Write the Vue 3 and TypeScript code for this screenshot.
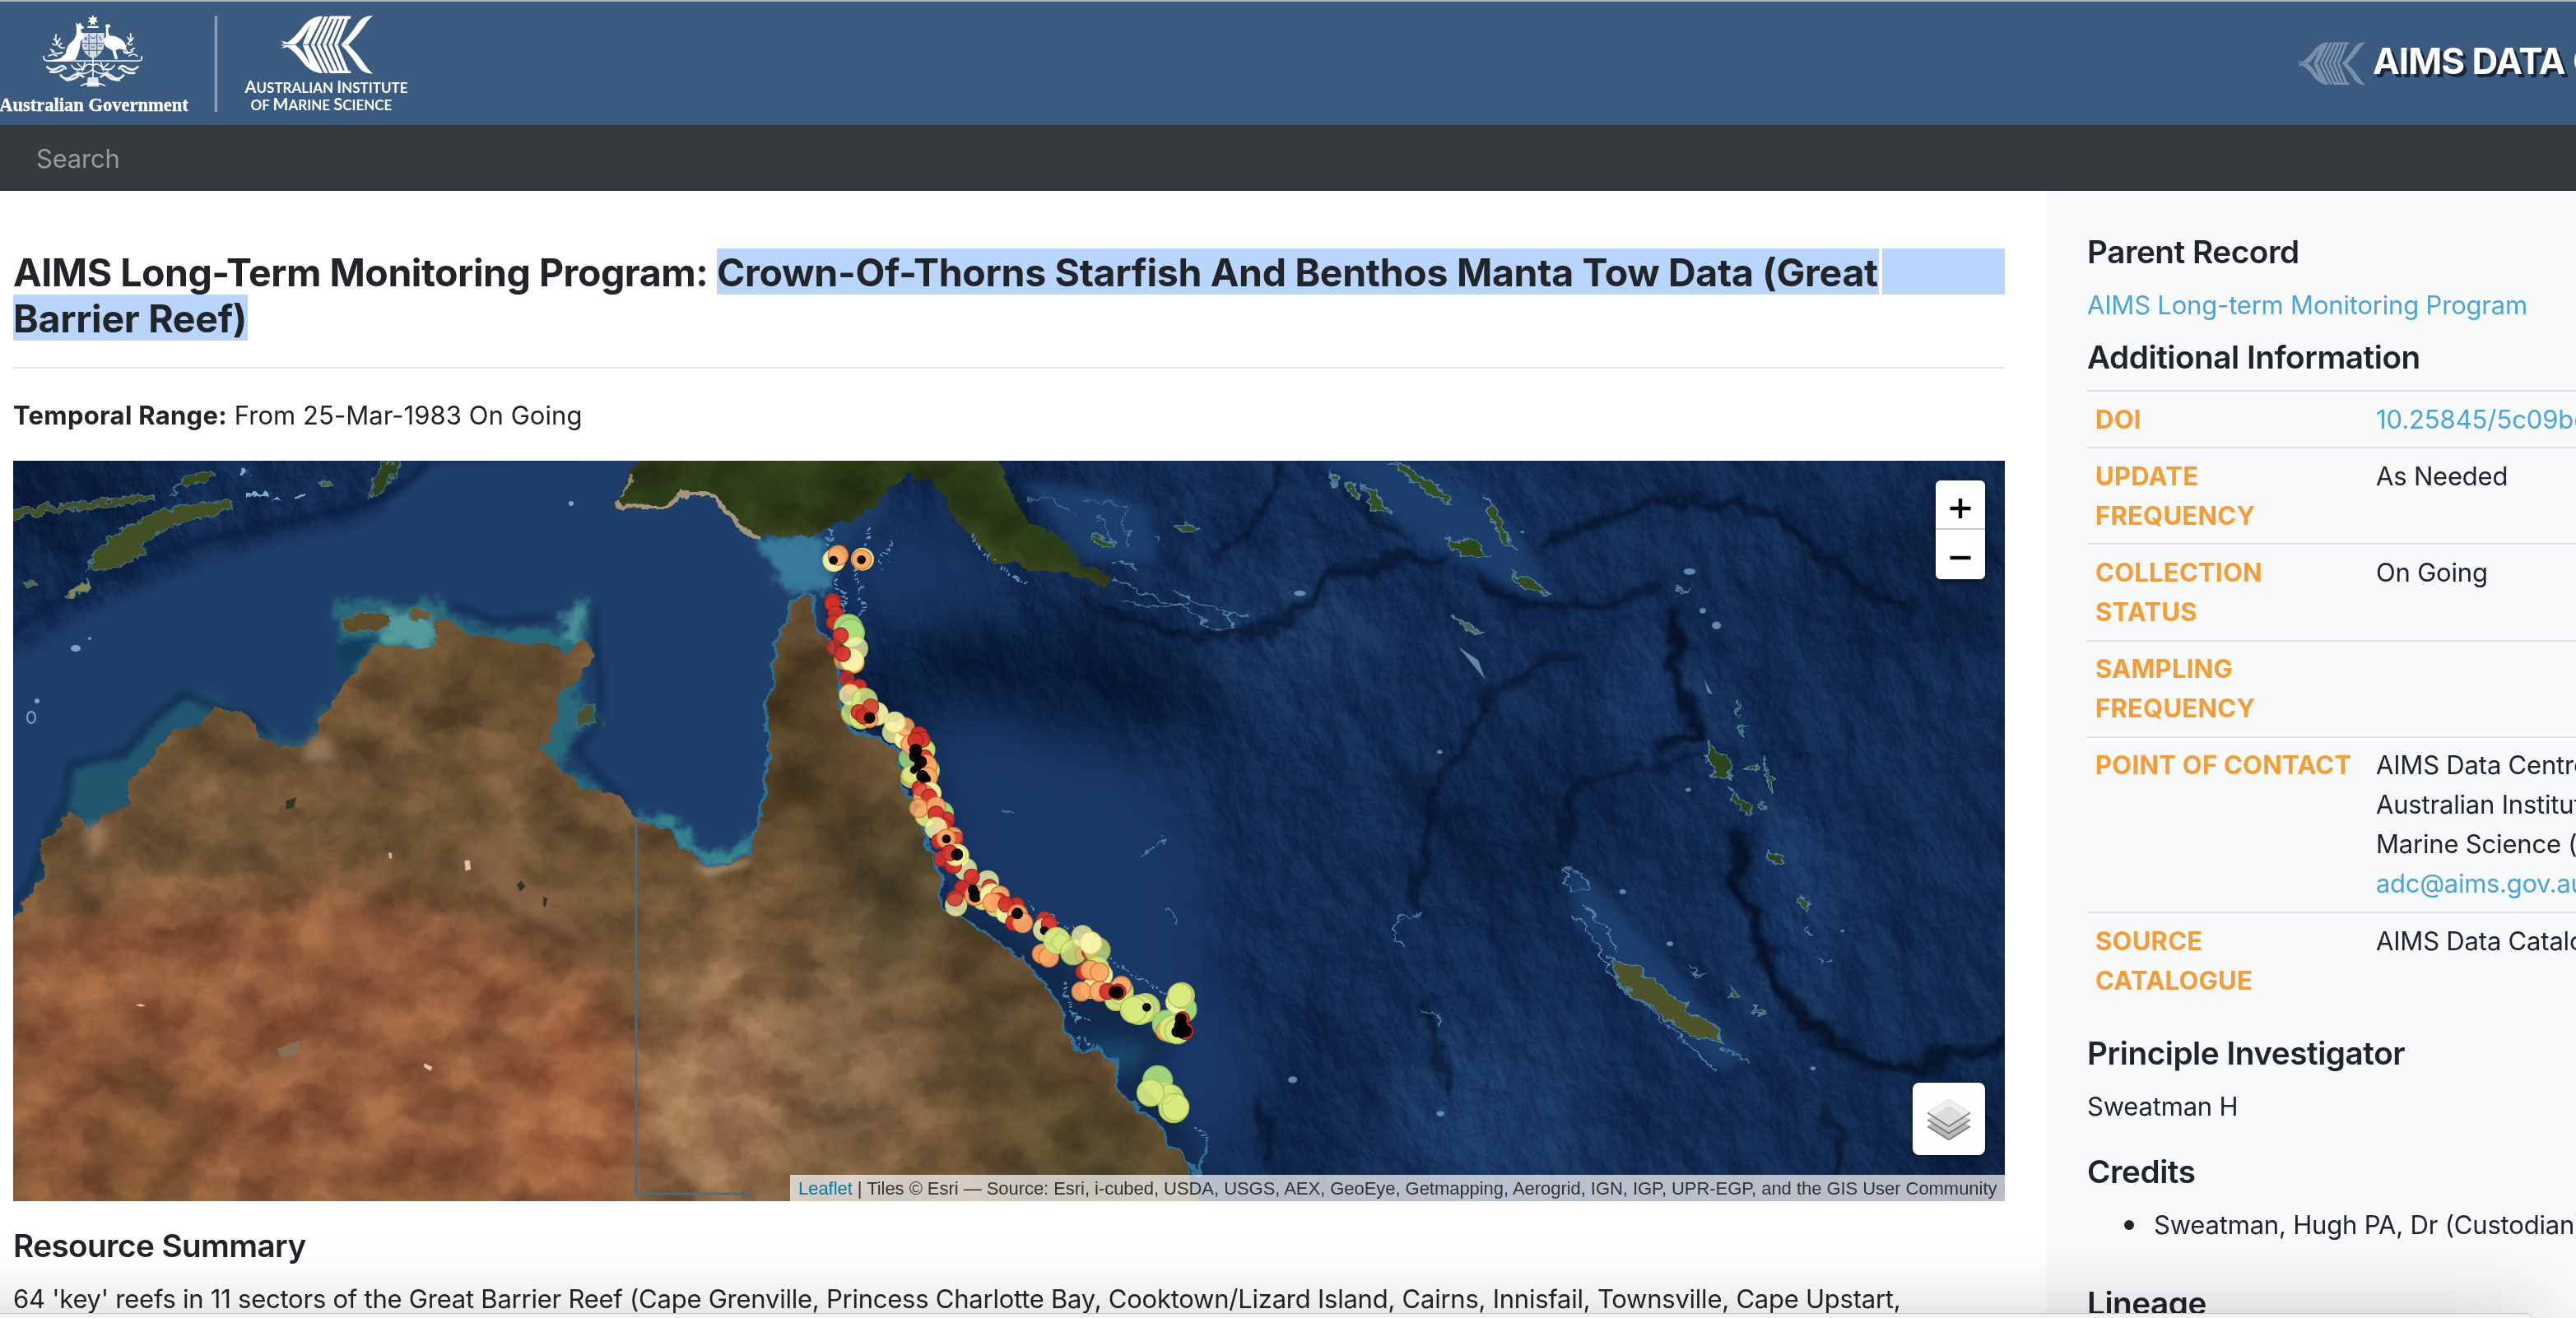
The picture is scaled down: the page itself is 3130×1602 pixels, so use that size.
<script setup lang="ts">
type Kind = 'r' | 'o' | 'y' | 'l' | 'g' | 'k'
type Marker = [x: number, y: number, r: number, kind: Kind, opacity?: number]

const palette: Record<Kind, { fill: string; stroke: string }> = {
  r: { fill: '#d3322b', stroke: '#9e2521' },
  o: { fill: '#fba766', stroke: '#cf7434' },
  y: { fill: '#fbf7ae', stroke: '#d6d765' },
  l: { fill: '#d8e97f', stroke: '#a9c356' },
  g: { fill: '#addf7f', stroke: '#7fbb5c' },
  k: { fill: '#000000', stroke: '#000000' },
}

// Reef survey markers, northern sectors (thirds of a map pixel)
const north: Marker[] = [
  [220, 243, 40, 'y'], [235, 225, 36, 'o'], [218, 243, 14, 'k'],
  [324, 239, 40, 'y'], [321, 240, 35, 'o'], [320, 241, 14, 'k'],
  [216, 392, 28, 'r'], [215, 402, 28, 'r'], [226, 436, 27, 'r'], [220, 470, 27, 'r'],
  [272, 492, 52, 'g'], [281, 508, 50, 'g'], [244, 517, 28, 'r'],
  [300, 565, 43, 'y', 0.8], [220, 560, 28, 'r', 0.8], [256, 607, 35, 'o', 0.8], [290, 615, 40, 'o'],
  [286, 607, 42, 'y'], [252, 584, 28, 'r'],
  [266, 673, 28, 'r', 0.85], [280, 705, 27, 'r'], [312, 704, 27, 'r'],
  [292, 800, 45, 'l', 0.85], [318, 815, 43, 'l'], [278, 734, 38, 'y', 0.85], [376, 803, 41, 'y'],
  [332, 755, 46, 'l', 0.9], [311, 797, 28, 'r'], [350, 823, 30, 'o'], [328, 812, 28, 'r'],
  [354, 778, 29, 'r', 0.9], [350, 818, 19, 'k'],
  [435, 870, 38, 'y', 0.85], [475, 895, 35, 'y'], [480, 850, 33, 'o', 0.9], [442, 834, 38, 'y', 0.95],
  [550, 935, 38, 'l'], [500, 965, 42, 'g', 0.9], [500, 915, 35, 'o'], [530, 880, 30, 'r'],
  [542, 897, 28, 'r'], [517, 900, 28, 'r'], [562, 1010, 42, 'l'], [500, 1036, 36, 'l'],
  [550, 962, 28, 'r'], [555, 992, 40, 'o'], [500, 1030, 35, 'o', 0.7], [500, 1025, 32, 'l'],
  [535, 1075, 30, 'r'], [560, 1035, 37, 'o'],
  [518, 935, 21, 'k'], [516, 957, 20, 'k'], [536, 978, 21, 'k'], [511, 1008, 12, 'k'], [523, 1000, 13, 'k'],
  [542, 1030, 20, 'k'], [551, 1042, 20, 'k'],
  [570, 1093, 40, 'y'], [548, 1100, 38, 'o'], [532, 1075, 26, 'r', 0.7], [567, 1105, 28, 'r'],
  [615, 1165, 40, 'g'], [555, 1175, 38, 'l'], [530, 1147, 34, 'o', 0.9], [592, 1140, 34, 'o'],
  [630, 1190, 29, 'r'], [620, 1215, 30, 'r'], [592, 1168, 29, 'r'], [592, 1220, 40, 'y', 0.9],
  [655, 1250, 33, 'o'], [665, 1260, 26, 'r', 0.8], [602, 1268, 27, 'r'], [629, 1258, 34, 'o'], [630, 1259, 14, 'k'],
]

// Central and southern sectors
const south: Marker[] = [
  [193, 191, 28, 'r'], [250, 180, 41, 'y'], [280, 230, 40, 'y', 0.85], [235, 215, 30, 'r'], [243, 178, 38, 'y'],
  [222, 170, 29, 'r'], [249, 176, 20, 'k'],
  [360, 275, 40, 'y', 0.85], [268, 298, 28, 'r'], [302, 257, 28, 'r'], [245, 361, 39, 'y', 0.85],
  [241, 335, 29, 'r', 0.9], [340, 345, 32, 'l'], [314, 325, 37, 'o'], [307, 305, 17, 'k'], [315, 327, 21, 'k'],
  [367, 295, 28, 'r'], [375, 325, 42, 'y'], [405, 325, 34, 'o'], [390, 365, 37, 'l'], [400, 345, 29, 'r'],
  [378, 351, 35, 'o'], [427, 390, 35, 'y'], [465, 360, 28, 'r'], [427, 358, 28, 'r'], [470, 395, 36, 'o'],
  [455, 425, 29, 'r'], [488, 425, 36, 'o'], [468, 391, 19, 'k'],
  [567, 413, 29, 'r'], [568, 450, 41, 'y', 0.9], [585, 430, 29, 'r'], [567, 453, 14, 'k'],
  [558, 538, 35, 'o'], [583, 550, 36, 'o'], [635, 495, 34, 'o'], [612, 490, 48, 'l'], [625, 495, 30, 'l', 0.5],
  [672, 532, 46, 'l', 0.9], [710, 540, 31, 'o', 0.4], [730, 530, 26, 'r'], [760, 525, 47, 'l', 0.8],
  [706, 474, 39, 'y', 0.85], [736, 498, 40, 'y'],
  [710, 603, 29, 'r'], [760, 590, 42, 'l'], [736, 665, 35, 'y'], [775, 615, 40, 'y'], [735, 597, 35, 'o'],
  [768, 605, 34, 'o'], [828, 705, 40, 'l'], [845, 675, 46, 'l'], [702, 675, 35, 'o'], [768, 675, 36, 'o'],
  [848, 655, 35, 'o'], [797, 675, 29, 'r'], [835, 677, 29, 'r'], [822, 678, 19, 'k'], [834, 678, 21, 'k'],
  [936, 735, 52, 'l', 0.95], [912, 742, 54, 'l'], [892, 742, 48, 'l'], [940, 733, 14, 'k'],
  [1075, 740, 47, 'g'], [1012, 795, 51, 'g'], [1050, 715, 40, 'y'], [1067, 690, 47, 'l', 0.95], [1061, 690, 44, 'l'],
  [1010, 820, 36, 'o'], [1035, 812, 50, 'l'], [1052, 820, 46, 'l'], [1070, 775, 26, 'r'], [1080, 820, 30, 'r'],
  [1065, 775, 19, 'k'], [1064, 800, 22, 'k'], [1050, 822, 18, 'k'], [1083, 820, 20, 'k'], [1067, 826, 18, 'k'],
  [1005, 1045, 40, 'l'], [980, 1000, 54, 'g'], [1025, 1065, 50, 'l'], [1038, 1100, 54, 'l'], [1045, 1098, 49, 'l'],
  [1000, 1045, 40, 'l', 0.4], [954, 1045, 49, 'l'],
]

const rows = [
  { label: 'DOI', lines: ['10.25845/5c09bc4ff315b'], link: 0 },
  { label: 'UPDATE FREQUENCY', lines: ['As Needed'], link: -1 },
  { label: 'COLLECTION STATUS', lines: ['On Going'], link: -1 },
  { label: 'SAMPLING FREQUENCY', lines: [], link: -1 },
  { label: 'POINT OF CONTACT', lines: ['AIMS Data Centre', 'Australian Institute of', 'Marine Science (AIMS)', 'adc@aims.gov.au'], link: 3 },
  { label: 'SOURCE CATALOGUE', lines: ['AIMS Data Catalogue'], link: -1 },
]

const ribs = [0, 1, 2, 3, 4]

const australia =
  'M16 1122L32 1087L51 1066L54 1019L89 987L108 1014L124 987L156 981L156 943L185 926L198 896L236 879L261 858L287 861L306 879L325 905L370 908L383 896L389 870L418 838L434 808L459 785L497 791L529 782L529 755L548 752L568 764L612 776L638 785L676 785L686 794L708 779L724 791L708 820L695 835L676 838L679 879L657 908L676 928L714 961L759 972L775 993L816 1008L829 1031L855 1046L886 1049L909 1037L918 1002L931 949L934 902L931 867L938 826L941 785L957 755L960 730L977 717L990 728L993 767L1007 773L1015 807L1022 833L1023 863L1043 893L1073 893L1090 910L1097 947L1107 970L1117 997L1130 1030L1140 1060L1148 1103L1167 1115L1190 1127L1213 1147L1247 1163L1260 1187L1283 1210L1293 1240L1303 1273L1320 1278L1333 1270L1353 1283L1357 1313L1370 1337L1397 1357L1410 1380L1430 1400L1445 1420L1455 1470L0 1470L0 1122Z'
const newGuinea =
  'M784 550L765 573L753 609L759 618L810 612L829 600L861 600L893 632L918 654L990 652L1017 637L1057 623L1083 598L1098 578L1132 582L1153 620L1173 647L1207 677L1248 691L1296 699L1343 714L1351 702L1312 682L1284 648L1248 636L1224 584L1205 550Z'
const eastCoast =
  'M775 993L816 1008L829 1031L855 1046L886 1049L909 1037L918 1002L931 949L934 902L931 867L938 826L941 785L957 755L960 730L977 717L990 728L993 767L1007 773L1015 807L1022 833L1023 863L1043 893L1073 893L1090 910L1097 947L1107 970L1117 997L1130 1030L1140 1060L1148 1103L1167 1115L1190 1127L1213 1147L1247 1163L1260 1187L1283 1210L1293 1240L1303 1273L1320 1278L1333 1270L1353 1283L1357 1313L1370 1337L1397 1357L1410 1380L1430 1400L1445 1420L1458 1425L1470 1385'
</script>

<template>
  <div class="page">
    <svg class="defs" width="0" height="0" aria-hidden="true">
      <symbol id="fish" viewBox="985 50 336 223" preserveAspectRatio="none">
        <g id="fish-half">
          <path d="M988 148L1012 154Q1036 137 1058 108Q1088 62 1128 56L1138 57L1086 161L1066 161L1094 88Q1062 148 1038 162L988 160L1000 156Z" />
          <path v-for="n in ribs" :key="n" :d="`M${1095 + n * 21} 162L${1108 + n * 21} 162L${1157 + n * 19} 57L${1144 + n * 19} 57Z`" />
          <path d="M1165 56H1240L1236 66H1160Z" />
          <path d="M1203 162Q1235 130 1262 85Q1282 52 1318 55Q1302 66 1288 90Q1262 130 1230 162Z" />
        </g>
        <use href="#fish-half" transform="matrix(1 0 0 -1 0 325)" />
      </symbol>
    </svg>

    <header class="banner">
      <svg class="logos" viewBox="0 0 1568 456" width="540" height="152" preserveAspectRatio="none">
        <g fill="#fff">
          <path d="M328 54L333 65L343 62L338 73L346 80L335 81L334 92L328 86L320 92L320 81L309 80L318 73L312 63L323 65Z" />
          <rect x="308" y="95" width="40" height="7" rx="3" />
          <!-- kangaroo -->
          <path d="M268 82L276 90L283 82L288 92L298 101L284 108L292 125L318 138L292 138L284 152L282 172L276 194L266 218L232 222L190 224L166 222L210 214L232 196Q234 166 258 148Q272 130 270 108Z" />
          <!-- emu -->
          <path d="M372 90L386 88L390 98L382 102L382 118L386 130Q420 130 440 156L446 184L420 178L408 184L416 216H406L396 184L374 170Q362 152 366 144L374 134L374 102Z" />
          <path d="M289 120H368V160Q366 196 328 214Q290 196 289 160Z" opacity=".78" />
        </g>
        <g fill="none" stroke="#3c5b80" stroke-width="3">
          <path d="M314 122V202M342 122V202M290 158H367M290 184H362" />
          <path d="M298 134l10 12M308 134l-10 12M320 134q10 12 16 0M350 132l8 14M322 168q6 12 12 0M298 168h10M348 168h12" />
        </g>
        <g fill="none" stroke="#fff" stroke-width="5" stroke-linecap="round" opacity=".92">
          <path d="M154 206q-2 14 14 16H490q14 -2 10 -16" />
          <path d="M186 160q12 10 20 -6M198 126q-4 22 4 36M206 166q8 12 22 8M184 188q16 14 34 2M172 204q14-10 28 0M190 142l10 8M212 140l-8 12M216 158l-8 10M178 180l12 6M206 196l14-4" />
          <path d="M466 160q-8 8-16-2M460 122q6 20-8 38M468 186q-16 14-32 0M484 204q-14-12-28 0M444 166q-6 12 6 22M450 136l8 10M470 138l-8 12M474 176l-12 6M450 196l-12-4" />
          <path d="M166 244q20 20 44 0q14-10 22 6M178 262q26 4 44-10M214 274q16 24 40 4q20-16 40 2M234 292q30 0 44-18" stroke-width="8" />
          <path d="M486 244q-20 20-44 0q-14-10-22 6M474 266q-26 4-44-14M436 274q-16 24-40 4q-20-16-40 2M420 292q-30 0-44-18" stroke-width="8" />
          <path d="M328 214V280M286 312q20-12 42-6q22-6 42 6M252 238q20 30 46 6q14-18 30-4q16-14 30 4q26 24 46-6M270 262q28 16 56-8q30 24 56 8M274 232l22 20M382 232l-22 20M300 228l-10 30M356 228l10 30M262 252h24M370 252h24" />
        </g>
        <path d="M310 282h36l4 34h-44z" fill="#fff" opacity=".85" />
        <text x="-2" y="404" class="gov" textLength="666" lengthAdjust="spacingAndGlyphs">Australian Government</text>
        <rect x="757" y="58" width="10" height="350" fill="#8e9db5" />
        <use href="#fish" x="988" y="53" width="331" height="218" fill="#fff" />
        <text x="864" y="340" class="inst" textLength="575" lengthAdjust="spacingAndGlyphs">A<tspan class="sc">USTRALIAN </tspan>I<tspan class="sc">NSTITUTE</tspan></text>
        <text x="884" y="403" class="inst" textLength="499" lengthAdjust="spacingAndGlyphs"><tspan class="sc">OF </tspan>M<tspan class="sc">ARINE </tspan>S<tspan class="sc">CIENCE</tspan></text>
      </svg>
      <div class="brand">
        <svg width="84" height="54" class="brand-fish" preserveAspectRatio="none"><use href="#fish" width="84" height="54" fill="#fff" /></svg>
        <span class="brand-name">AIMS DATA CENTRE</span>
      </div>
    </header>

    <nav class="searchbar"><span>Search</span></nav>

    <div class="columns">
      <main class="record">
        <h1 class="title">
          <span class="title-line">
            <span class="t1">AIMS Long-Term Monitoring Program:</span>
            <mark class="t2">Crown-Of-Thorns Starfish And Benthos Manta Tow Data (Great</mark>
            <mark class="rest"></mark>
          </span>
          <span class="title-line"><mark class="t3">Barrier Reef)</mark></span>
        </h1>
        <hr class="rule" />
        <p class="temporal"><b>Temporal Range:</b> <span>From 25-Mar-1983 On Going</span></p>

        <div class="map">
          <svg class="tiles" viewBox="16 560 2420 900" width="2420" height="900" color-interpolation-filters="sRGB">
            <defs>
              <filter id="coast" x="-5%" y="-5%" width="110%" height="110%">
                <feTurbulence type="fractalNoise" baseFrequency=".045" numOctaves="4" seed="4" />
                <feDisplacementMap in="SourceGraphic" scale="20" xChannelSelector="R" yChannelSelector="G" />
              </filter>
              <filter id="ragged" x="-20%" y="-20%" width="140%" height="140%">
                <feTurbulence type="fractalNoise" baseFrequency=".05" numOctaves="3" seed="9" />
                <feDisplacementMap in="SourceGraphic" scale="26" xChannelSelector="R" yChannelSelector="G" />
              </filter>
              <filter id="ridge" x="-20%" y="-20%" width="140%" height="140%">
                <feTurbulence type="fractalNoise" baseFrequency=".02" numOctaves="4" seed="3" result="n" />
                <feGaussianBlur in="SourceGraphic" stdDeviation="4" result="s" />
                <feDisplacementMap in="s" in2="n" scale="44" xChannelSelector="R" yChannelSelector="G" />
              </filter>
              <filter id="b4" x="-30%" y="-30%" width="160%" height="160%"><feGaussianBlur stdDeviation="4" /></filter>
              <filter id="b10" x="-30%" y="-30%" width="160%" height="160%"><feGaussianBlur stdDeviation="10" /></filter>
              <filter id="b35" x="-50%" y="-50%" width="200%" height="200%"><feGaussianBlur stdDeviation="32" /></filter>
              <filter id="seabed" x="0" y="0" width="100%" height="100%">
                <feTurbulence type="fractalNoise" baseFrequency=".012 .009" numOctaves="6" seed="21" />
                <feColorMatrix values="0 0 0 0 0  0 0 0 0 0  0 0 0 0 0  1 0 0 0 0" />
                <feDiffuseLighting surfaceScale="14" diffuseConstant=".74" lighting-color="#fff">
                  <feDistantLight azimuth="315" elevation="45" />
                </feDiffuseLighting>
              </filter>
              <filter id="grain" x="0" y="0" width="100%" height="100%">
                <feTurbulence type="fractalNoise" baseFrequency=".014 .018" numOctaves="7" seed="7" />
                <feColorMatrix values="1.6 0 0 0 -.3  1.6 0 0 0 -.3  1.6 0 0 0 -.3  0 0 0 0 1" />
              </filter>
              <clipPath id="land"><path :d="australia" /><path :d="newGuinea" /></clipPath>
            </defs>

            <rect x="16" y="560" width="2420" height="900" fill="#122a52" />
            <!-- basins and shelves -->
            <g filter="url(#b35)">
              <ellipse cx="1270" cy="830" rx="240" ry="75" fill="#081a38" />
              <ellipse cx="1850" cy="1000" rx="130" ry="90" fill="#0d2144" />
              <ellipse cx="2350" cy="700" rx="150" ry="90" fill="#0d2144" />
              <ellipse cx="1250" cy="590" rx="90" ry="30" fill="#0a1c3c" />
              <ellipse cx="60" cy="600" rx="130" ry="70" fill="#0a1c3c" />
              <ellipse cx="1560" cy="770" rx="120" ry="80" fill="#18355f" />
              <ellipse cx="1810" cy="1350" rx="120" ry="110" fill="#1a3965" />
              <ellipse cx="1750" cy="610" rx="100" ry="40" fill="#1b3a68" />
              <ellipse cx="2010" cy="850" rx="60" ry="50" fill="#183563" />
              <ellipse cx="2180" cy="1100" rx="50" ry="130" fill="#193866" />
              <ellipse cx="2400" cy="1400" rx="80" ry="80" fill="#0b1d3f" />
              <ellipse cx="1600" cy="1330" rx="60" ry="110" fill="#0f2448" />
            </g>
            <rect x="16" y="560" width="2420" height="900" filter="url(#seabed)" class="soft" />
            <g filter="url(#b35)">
              <path d="M1110 870L1200 860L1425 945L1465 1070L1470 1190L1540 1300L1480 1400L1440 1470L1380 1300L1150 1060Z" fill="#1a3866" />
              <path d="M1090 640L1140 610L1180 690L1230 730L1160 750L1060 750L1000 690Z" fill="#193763" />
            </g>
            <g fill="none" stroke="#040e22" stroke-linecap="round" filter="url(#ridge)" opacity=".85">
              <g transform="translate(1200 550) scale(.7972 .574)" stroke-width="14">
                <path d="M180 330Q360 430 440 360Q520 260 590 235L720 215Q800 330 870 330L1010 290" />
                <path d="M850 200Q950 110 1050 95L1200 130L1260 220L1400 330" />
                <path d="M1035 340Q1050 480 1080 600L1040 610" stroke-width="20" />
                <path d="M1138 800Q1150 980 1220 1160Q1320 1320 1430 1300L1550 1250" stroke-width="24" />
                <path d="M900 420L760 520L700 660L660 780L655 960" stroke-width="10" />
                <path d="M880 860Q870 700 980 660L1110 650" stroke-width="9" />
                <path d="M450 20L400 180L340 220M540 70L640 180" stroke-width="10" />
                <path d="M670 1180L690 1300L700 1340M420 1360L430 1500M1270 1400L1310 1520" stroke-width="10" />
              </g>
            </g>
            <!-- Arafura shelf and Timor trough -->
            <path d="M0 810L90 750L200 700L330 655L450 630L510 560L1090 540L1070 620L1000 700L1000 1120L0 1130Z" fill="#1f3f6b" filter="url(#b10)" />
            <path d="M10 770Q120 690 220 665Q330 635 420 620Q490 600 520 560" fill="none" stroke="#0a1d40" stroke-width="9" filter="url(#b4)" opacity=".8" />

            <!-- shallow water -->
            <g filter="url(#ragged)">
              <g filter="url(#b4)">
                <path d="M410 730L470 735L540 725L550 750L600 765L680 765L705 725L722 740L712 790L700 850L735 870L690 900L680 930L730 960L720 985L640 915L660 800L410 820Z" fill="#286a7b" />
                <path d="M460 745L525 745L528 785L470 785Z" fill="#569a9c" />
                <path d="M690 740L712 735L705 785L680 780Z" fill="#4a8d99" />
                <path d="M410 780L460 770L440 800L412 825Z" fill="#123f5e" />
                <path d="M220 850L250 840L310 880L340 895L375 900L385 870L412 840L420 860L380 925L310 920L250 890L150 990L100 1020L80 980L90 930L150 920L190 880Z" fill="#22566f" />
                <path d="M918 655L1000 650L1010 720L960 720L935 690Z" fill="#377a9c" />
                <path d="M775 985L830 1000L850 1030L890 1035L915 1010L915 1050L850 1060L810 1025Z" fill="#35858f" />
                <path d="M16 1115L50 1060L60 1000L95 985L80 1060L30 1130Z" fill="#18455d" />
              </g>
            </g>
            <g filter="url(#b4)" fill="none" stroke="#0f2b4a" stroke-width="9" opacity=".8">
              <path d="M16 1105L45 1055L60 1005L80 975L85 930L150 915L190 870L225 842L250 855L300 870L330 895" />
              <path d="M720 735L725 790L730 830L728 880L700 910L735 950L760 972M550 735L600 755L670 750" />
            </g>
            <g filter="url(#b10)">
              <path d="M1150 1090L1260 1150L1380 1230L1430 1280L1400 1300L1440 1370L1465 1430L1430 1410L1290 1230L1160 1120Z" fill="#13294a" />
              <path d="M1320 1260L1400 1270L1370 1310L1340 1290Z" fill="#17466a" />
            </g>

            <!-- land -->
            <g filter="url(#coast)">
              <g clip-path="url(#land)">
                <rect x="0" y="550" width="1480" height="920" fill="#6f5436" />
                <g filter="url(#b35)">
                  <path d="M0 1130L200 1090L450 1080L560 1110L720 1170L770 1240L770 1480L0 1480Z" fill="#8f5a3a" />
                  <ellipse cx="700" cy="1370" rx="80" ry="120" fill="#a0623f" />
                  <ellipse cx="180" cy="1390" rx="60" ry="110" fill="#77502f" />
                  <ellipse cx="600" cy="820" rx="90" ry="40" fill="#574527" />
                  <ellipse cx="560" cy="1010" rx="180" ry="50" fill="#6c5334" />
                  <ellipse cx="880" cy="1330" rx="90" ry="160" fill="#9a7350" />
                  <ellipse cx="1050" cy="1270" rx="70" ry="150" fill="#866748" />
                  <ellipse cx="970" cy="900" rx="50" ry="150" fill="#493b22" />
                  <ellipse cx="1080" cy="1080" rx="60" ry="120" fill="#4a4029" />
                  <ellipse cx="1220" cy="1260" rx="70" ry="100" fill="#55452b" />
                  <ellipse cx="1330" cy="1410" rx="110" ry="90" fill="#52462a" />
                  <ellipse cx="1000" cy="590" rx="340" ry="90" fill="#2b3a17" />
                  <ellipse cx="1290" cy="660" rx="120" ry="70" fill="#2b3f17" />
                </g>
                <rect x="0" y="550" width="1480" height="920" filter="url(#grain)" class="overlay" />
              </g>
              <path d="M753 609L759 618L810 612L829 600L861 600L893 632L918 654" fill="none" stroke="#a3967a" stroke-width="6" />
              <path d="M768 575L756 606" stroke="#8d8868" stroke-width="3" />
            </g>

            <!-- inland details -->
            <g transform="translate(0 550) scale(.63776 .5868)" filter="url(#b10)">
              <path d="M870 810Q930 780 980 860L1100 980L1150 1070L1200 1100L1210 1130L1140 1040L1050 980L960 930Z" fill="#94694d" opacity=".6" />
              <path d="M590 590L630 585L640 640L570 640Z" fill="#a98a6c" opacity=".7" />
              <path d="M165 770L195 770L200 810L170 850Z" fill="#b88f6d" opacity=".7" />
              <path d="M760 1360Q800 1390 860 1380M920 1290l60 10M840 1330l80 10M900 1200l90 20" fill="none" stroke="#5d3f2a" stroke-width="12" opacity=".7" />
            </g>
            <path d="M832 1044L860 1056L912 1044L916 1020L912 1050L860 1064Z" fill="#b8a078" filter="url(#b4)" />
            <g transform="translate(0 550) scale(.63776 .5868)">
              <path d="M885 845l10 0 2 18-10 4z M808 1265l16 8-4 8-12-8z M258 1144l10 -2 10 4-10 2z M740 828l6 2 0 12-4-2z" fill="#dcc5ad" />
              <path d="M545 722l20-8-6 20-14 6zM985 895l8-8 8 12-10 10zM1035 920l8 4-4 18-4-4z" fill="#2c3422" />
              <path d="M527 1235l30-12 16-6-6 30-32 6z" fill="#87765f" opacity=".8" />
            </g>

            <!-- islands of the Timor and Banda seas -->
            <g transform="translate(0 550) scale(.63776 .5868)" filter="url(#ragged)" stroke="#45707a" stroke-width="3">
              <path d="M165 245L190 190L240 155L290 125L370 105L440 100L445 115L380 135L300 165L265 215L210 240Z" fill="#434e22" />
              <path d="M125 298L165 265L172 280L140 302Z" fill="#8b8554" />
              <path d="M10 115L100 108L180 98L292 88L290 100L200 112L100 125L15 140Z" fill="#454d27" />
              <path d="M330 85L350 55L400 38L415 48L380 62L345 70Z" fill="#3a481f" />
              <path d="M715 60L728 25L765 10L755 40L725 80L700 95Z" fill="#2f421b" />
              <path d="M610 62l16-4 8 8-12 6zM50 268l18-4 4 8-18 6z" fill="#5b6436" />
              <path d="M648 345L700 330L745 335L740 360L700 375L655 365Z" fill="#5f4e2c" />
              <path d="M785 325L825 325L815 345L780 345Z" fill="#6e5a37" />
              <path d="M1100 530L1130 520L1135 560L1100 565Z" fill="#4a5236" />
              <path d="M470 85h40M460 40h14M560 90h16M520 96h14" fill="none" stroke="#7eb0cc" stroke-width="6" />
            </g>

            <!-- Solomon Islands, Vanuatu, New Caledonia and reefs -->
            <g transform="translate(1200 550) scale(.7972 .574)">
              <g filter="url(#b10)" fill="#1b3e6c">
                <path d="M50 60L180 80L250 120L260 230L150 230L100 150Z" />
                <path d="M510 10L640 20L800 150L860 300L800 290L680 200Z" />
                <path d="M880 880L920 900L1160 1280L1110 1310L900 1000Z" />
              </g>
              <g filter="url(#ragged)" stroke="#4f7f9c" stroke-width="3">
                <path d="M610 20L640 28L690 75L710 110L680 95L640 55Z" fill="#344f22" />
                <path d="M760 95L775 120L800 190L806 205L785 185L765 140Z" fill="#334f20" />
                <path d="M570 70L590 80L615 130L590 125ZM548 60L558 68L566 100L552 90ZM522 40L532 50L530 80Z" fill="#355022" />
                <path d="M697 180L745 190L765 222L720 218Z" fill="#2f461a" />
                <path d="M795 250L830 270L860 300L822 290Z" fill="#35491e" />
                <path d="M285 152L300 150L325 165L300 170ZM155 175L190 185L195 205L165 195ZM200 230l20 0 2 14z" fill="#365024" />
                <path d="M1095 610L1128 650L1130 690L1105 688ZM1130 712L1165 750L1163 768L1145 760ZM1182 640L1194 690L1194 722L1186 700ZM1142 530l8 10-4 20zM1145 578l12 2-6 16zM1160 668l12-8-2 16zM1178 738l12 8-8 10zM1188 848L1210 850L1204 872L1194 868Z" fill="#2e421b" />
                <path d="M710 345L730 360L755 382L735 378Z" fill="#525f42" />
                <path d="M1045 285L1068 290L1055 300ZM1240 940l10 14 0 18-12-16zM1130 1130l14 16-10 4zM1170 1175l12 8-6 10z" fill="#3a4d2c" />
                <path d="M950 1070L1000 1100L1050 1160L1110 1220L1118 1250L1070 1235L1000 1165L955 1110Z" fill="#4d532b" />
              </g>
              <g filter="url(#ragged)" fill="none" stroke="#5b8cb2" stroke-width="2.500">
                <path d="M190 265L240 300L300 330L340 370L375 370L370 345L320 320L280 290M200 310L260 330L310 320M360 340L400 345" />
                <path d="M880 880L890 930L915 925L905 890Z M912 960L940 1000L960 1060M895 980L930 1040L950 1110L1050 1230L1110 1310M1120 1260L1160 1290" />
                <path d="M640 985Q620 970 622 1020L635 1050M645 975L662 980" />
                <path d="M230 855L270 820L268 835M270 965Q290 960 284 995" />
                <path d="M60 100L100 95L130 130M150 100L210 110L212 200M170 130L190 190M255 180q12-6 10 12" opacity=".7" />
                <path d="M1070 1080L1085 1110L1100 1105M1270 1065l10 14M1250 1000l6 20M25 760l14 4M655 1180L690 1190L692 1215" />
              </g>
              <g fill="#7fa8ca" opacity=".75">
                <path d="M718 412L748 440L758 480L740 450Z" />
                <path d="M1092 480L1105 512L1098 508Z" />
                <ellipse cx="1070" cy="252" rx="9" ry="7" /><ellipse cx="1090" cy="335" rx="5" ry="6" />
                <ellipse cx="1111" cy="366" rx="7" ry="8" /><ellipse cx="476" cy="298" rx="9" ry="6" />
                <circle cx="465" cy="1328" r="7" /><circle cx="689" cy="634" r="4" /><circle cx="815" cy="168" r="3" />
                <circle cx="968" cy="930" r="5" /><circle cx="1040" cy="1040" r="5" /><circle cx="1068" cy="714" r="4" />
                <circle cx="1258" cy="1304" r="4" /><circle cx="1303" cy="1013" r="3" /><circle cx="690" cy="1400" r="6" />
              </g>
            </g>
            <g fill="#8db8da" opacity=".85">
              <ellipse cx="92" cy="788" rx="6" ry="4" /><ellipse cx="38" cy="872" rx="5" ry="7" fill="none" stroke="#8db8da" stroke-width="2" />
              <circle cx="45" cy="852" r="3" /><circle cx="694" cy="612" r="3" /><circle cx="109" cy="776" r="2" />
            </g>

            <!-- reef shelf outline and state boundaries -->
            <g fill="none" stroke="#5d8fbd" stroke-width="3" stroke-dasharray="3 4" filter="url(#ragged)">
              <path d="M1040 690L1050 750M1025 715L1030 745M1015 700L1025 740M1005 660L1010 640M1055 640L1050 665M1085 660L1070 690" stroke-width="6" />
              <path d="M1180 650L1210 690L1250 710" stroke-width="5" />
              <path d="M1250 1100L1300 1130L1350 1165L1400 1200L1430 1210" />
              <path d="M1290 1195L1310 1240L1325 1235M1300 1260L1330 1270M1455 1365L1470 1395" stroke-width="5" />
            </g>
            <path :d="eastCoast" fill="none" stroke="#2f6f94" stroke-width="3.5" filter="url(#coast)" />
            <path d="M773 993V1451H909V1462" fill="none" stroke="#456e82" stroke-width="2.5" />

            <g stroke-width="4">
              <g transform="translate(940 600) scale(.33333)">
                <circle v-for="(m, i) in north" :key="i" :cx="m[0]" :cy="m[1]" :r="m[2]" :fill="palette[m[3]].fill" :stroke="palette[m[3]].stroke" :opacity="m[4] ?? 1" fill-opacity=".93" />
              </g>
              <g transform="translate(1080 980) scale(.33333)">
                <circle v-for="(m, i) in south" :key="i" :cx="m[0]" :cy="m[1]" :r="m[2]" :fill="palette[m[3]].fill" :stroke="palette[m[3]].stroke" :opacity="m[4] ?? 1" fill-opacity=".93" />
              </g>
            </g>
          </svg>

          <div class="zoom">
            <svg width="60" height="60"><path d="M17.500 34H42.500M30 22V46" stroke="#000" stroke-width="4.400" /></svg>
            <svg width="60" height="60"><path d="M17.500 34H42.500" stroke="#000" stroke-width="4.400" /></svg>
          </div>
          <div class="layers">
            <svg width="52" height="52" viewBox="0 0 52 52">
              <path d="M26 19L52 35L26 51.500L0 35Z" fill="#b9b9b9" /><path d="M0 35L26 51.500L52 35" fill="none" stroke="#747474" stroke-width="1.500" />
              <path d="M26 10L52 27L26 43.500L0 27Z" fill="#cdcdcd" /><path d="M0 27L26 43.500L52 27" fill="none" stroke="#747474" stroke-width="1.500" />
              <path d="M26 2L52 18.500L26 35L0 18.500Z" fill="#efefef" stroke="#c8c8c8" stroke-width=".7" />
              <path d="M26 10L44 22L26 34L8 22Z" fill="#dcdcdc" /><path d="M0 18.500L26 35L52 18.500" fill="none" stroke="#747474" stroke-width="1.500" />
            </svg>
          </div>
          <div class="attribution"><a>Leaflet</a> | Tiles © Esri — Source: Esri, i-cubed, USDA, USGS, AEX, GeoEye, Getmapping, Aerogrid, IGN, IGP, UPR-EGP, and the GIS User Community</div>
        </div>

        <h2 class="summary-title">Resource Summary</h2>
        <p class="summary">64 'key' reefs in 11 sectors of the Great Barrier Reef (Cape Grenville, Princess Charlotte Bay, Cooktown/Lizard Island, Cairns, Innisfail, Townsville, Cape Upstart,</p>
      </main>

      <aside class="side">
        <h2 class="h-parent">Parent Record</h2>
        <p class="parent-link"><a>AIMS Long-term Monitoring Program</a></p>
        <h2 class="h-info">Additional Information</h2>
        <div class="table">
          <div v-for="row in rows" :key="row.label" class="row">
            <div class="label">{{ row.label }}</div>
            <div class="value">
              <div v-for="(line, i) in row.lines" :key="line" :class="{ link: row.link === i }">{{ line }}</div>
            </div>
          </div>
        </div>
        <h2 class="h-pi">Principle Investigator</h2>
        <p class="pi">Sweatman H</p>
        <h2 class="h-credits">Credits</h2>
        <div class="credit"><i class="dot"></i><span>Sweatman, Hugh PA, Dr (Custodian)</span></div>
        <h2 class="h-lineage">Lineage</h2>
      </aside>
    </div>
    <div class="drawer"></div>
  </div>
</template>

<style>
body {
  margin: 0;
  overflow: hidden;
}
</style>

<style scoped>
.page {
  position: relative;
  width: 3130px;
  height: 1602px;
  overflow: hidden;
  background: #fff;
  color: #212529;
  font-family: Inter, sans-serif;
  font-size: 31px;
  line-height: 48px;
  white-space: nowrap;
}
.defs { position: absolute; }
h1, h2, p { margin: 0; }
a, .link { color: #4ba3d8; }

.banner {
  box-sizing: border-box;
  display: flex;
  justify-content: space-between;
  height: 152px;
  background: #3c5b80;
  box-shadow: inset 0 2px #b4b5b1;
}
.logos { display: block; }
.gov { font: 700 72px "Liberation Serif", serif; fill: #fff; stroke: #fff; stroke-width: 1px; }
.inst { font: 700 60px Lato, sans-serif; fill: #fff; }
.sc { font-size: 51px; }
.brand { display: flex; width: 339px; padding-top: 50px; }
.brand-fish { flex: none; opacity: 0.32; }
.brand-name {
  margin: -1px 0 0 8px;
  font-size: 44px;
  line-height: 50px;
  font-weight: 700;
  letter-spacing: -1px;
  color: #fff;
  text-shadow: 4px 4px #18263a;
}

.searchbar {
  box-sizing: border-box;
  height: 80px;
  padding: 17px 44px;
  background: #353a3e;
  border-bottom: 2px solid #2f3438;
  color: #989b9d;
  letter-spacing: -0.200px;
}
.columns { display: flex; height: 1370px; }
.record { flex: none; width: 2420px; padding: 70px 50px 0 16px; }
.title { font-size: 46.500px; font-weight: 700; }
.title-line { display: flex; height: 56px; line-height: 58px; }
.title mark { display: block; height: 56px; background: #bad5fb; color: inherit; }
.t1 { width: 855px; letter-spacing: -0.480px; }
.t2 { width: 1412px; letter-spacing: -0.320px; }
.title .rest { margin-left: 4px; flex: 1; }
.t3 { width: 285px; letter-spacing: -0.300px; }
.rule { height: 2px; margin: 32px 0; border: 0; background: #e3e4e5; }
.temporal { height: 47px; padding-top: 1px; margin-bottom: 32px; letter-spacing: 0.060px; }
.temporal b { letter-spacing: 0.300px; }

.map { position: relative; height: 900px; overflow: hidden; }
.tiles { display: block; }
.soft { mix-blend-mode: soft-light; opacity: 0.5; }
.overlay { mix-blend-mode: overlay; opacity: 0.27; }
.zoom {
  position: absolute;
  top: 24px;
  right: 24px;
  display: flex;
  flex-direction: column;
  width: 60px;
  height: 120px;
  background: #fff;
  border-radius: 6px;
  box-shadow: 0 2px 8px rgba(0, 0, 0, 0.5);
}
.zoom svg:first-child { box-shadow: inset 0 -2px #ccc; }
.layers {
  position: absolute;
  right: 24px;
  bottom: 56px;
  display: grid;
  place-items: center;
  width: 88px;
  height: 88px;
  background: #fff;
  border-radius: 8px;
  box-shadow: 0 2px 10px rgba(0, 0, 0, 0.4);
}
.attribution {
  position: absolute;
  right: 0;
  bottom: 0;
  box-sizing: border-box;
  width: 1476px;
  height: 32px;
  padding-left: 10px;
  background: rgba(255, 255, 255, 0.7);
  color: #333;
  font: 22px/33px "Liberation Sans", sans-serif;
  letter-spacing: -0.045px;
}
.attribution a { color: #0078a8; }

h2 { font-size: 38.700px; font-weight: 600; height: 48px; letter-spacing: -0.460px; }
.summary-title { margin-top: 30px; letter-spacing: -0.600px; }
.summary { margin-top: 17px; letter-spacing: -0.240px; }

.side {
  flex: 1;
  min-width: 0;
  overflow: hidden;
  box-sizing: border-box;
  padding: 50px 0 0 50px;
  background: #f8f9fb;
  letter-spacing: -0.190px;
}
.parent-link { margin: 17px 0 15px; }
.h-info { margin-bottom: 16px; }
.row { display: flex; border-top: 2px solid #dee2e6; padding: 9.600px 0; }
.label {
  box-sizing: border-box;
  width: 351px;
  flex: none;
  padding: 0 24px 0 10px;
  color: #f39c38;
  font-weight: 700;
  letter-spacing: 0.240px;
  white-space: normal;
}
.value .link { letter-spacing: -0.100px; }
.value .link:last-child:not(:first-child) { letter-spacing: -0.300px; }
.h-pi { margin: 31px 0 17px; }
.pi { margin-bottom: 31px; }
.h-credits { margin-bottom: 17px; }
.credit { display: flex; align-items: center; height: 48px; margin-bottom: 47px; }
.dot { flex: none; width: 12px; height: 12px; margin: 0 24px 0 45px; border-radius: 50%; background: #212529; }
.drawer {
  position: absolute;
  left: -200px;
  top: 1596px;
  width: 3278px;
  height: 300px;
  border: 1px solid #c6c6c6;
  border-radius: 12px;
  background: #f1f1f1;
  box-shadow: 0 10px 100px rgba(0, 0, 0, 0.22);
}
</style>
